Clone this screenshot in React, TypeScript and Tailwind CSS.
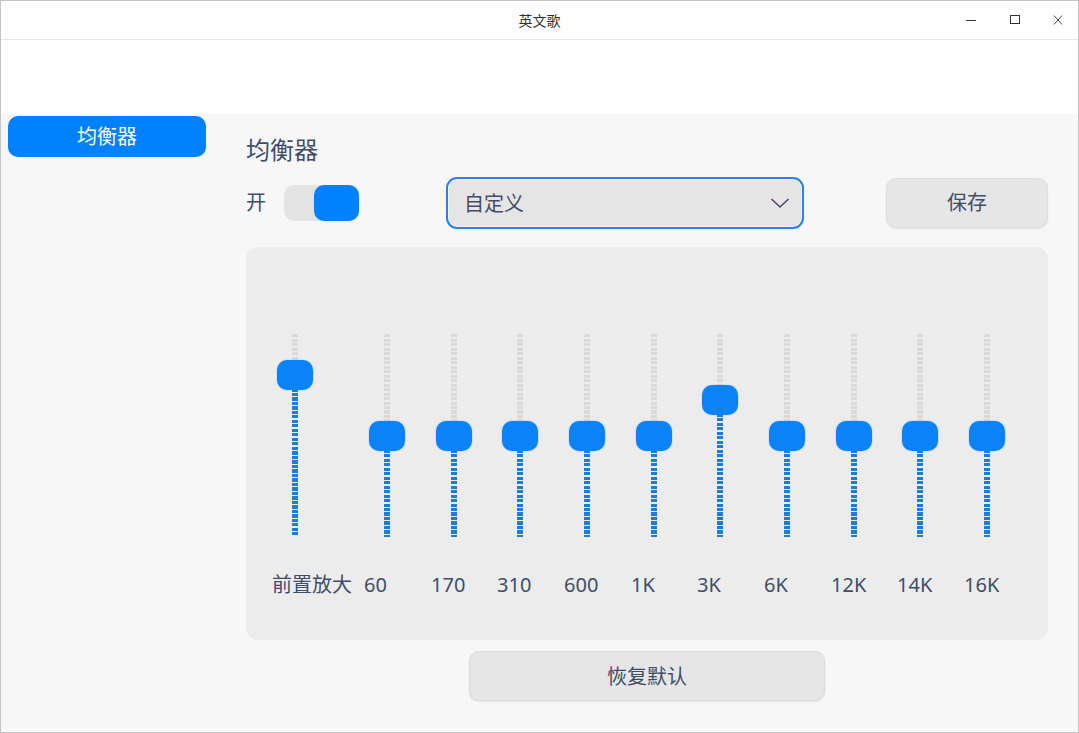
import React from "react";

const FONT = { fontFamily: '"Noto Sans", "Noto Sans CJK SC", sans-serif' };

const TRACK_H = 203;

type Band = { label: string; center: number; width: string };

const bands: Band[] = [
  { label: "前置放大", center: 41, width: "w-[92px]" },
  { label: "60", center: 102, width: "w-[67px]" },
  { label: "170", center: 102, width: "w-[66px]" },
  { label: "310", center: 102, width: "w-[67px]" },
  { label: "600", center: 102, width: "w-[67px]" },
  { label: "1K", center: 102, width: "w-[66px]" },
  { label: "3K", center: 66, width: "w-[67px]" },
  { label: "6K", center: 102, width: "w-[67px]" },
  { label: "12K", center: 102, width: "w-[66px]" },
  { label: "14K", center: 102, width: "w-[67px]" },
  { label: "16K", center: 102, width: "w-[67px]" },
];

function VSlider({ center }: { center: number }) {
  return (
    <div className="relative w-[46px] h-[203px]">
      <div
        className="absolute left-[20px] top-0 w-[6px] bg-[repeating-linear-gradient(to_bottom,#d9d9d9_0px,#d9d9d9_3px,transparent_3px,transparent_4.5px)]"
        style={{ height: center }}
      />
      <div
        className="absolute left-[20px] bottom-0 w-[6px] bg-[repeating-linear-gradient(to_bottom,#1a7ddb_0px,#1a7ddb_3px,transparent_3px,transparent_4.5px)]"
        style={{ height: TRACK_H - center }}
      />
      <div
        className="absolute left-[5px] w-[36px] h-[30px] rounded-[10px] bg-[#0a83f9] shadow-[0_0_2px_rgba(0,129,255,0.35)]"
        style={{ top: center - 15 }}
      />
    </div>
  );
}

export default function App() {
  return (
    <div
      className="w-[1079px] h-[733px] border border-[#c4c4c4] bg-white flex flex-col overflow-hidden"
      style={FONT}
    >
      {/* Title bar */}
      <div className="h-[39px] shrink-0 border-b border-[#e6e6e6] grid grid-cols-[1fr_auto_1fr] items-center">
        <div />
        <div className="text-[14px] text-[#303030]">英文歌</div>
        <div className="flex justify-end items-center h-full">
          <div className="w-[44px] h-full flex items-center justify-center">
            <svg width="12" height="12" viewBox="0 0 12 12">
              <path d="M1 6.5h10" stroke="#333" strokeWidth="1" />
            </svg>
          </div>
          <div className="w-[44px] h-full flex items-center justify-center">
            <svg width="12" height="12" viewBox="0 0 12 12">
              <rect x="1.5" y="1.5" width="9" height="8" fill="none" stroke="#333" strokeWidth="1" />
            </svg>
          </div>
          <div className="w-[41px] h-full flex items-center justify-center">
            <svg width="12" height="12" viewBox="0 0 12 12">
              <path d="M2 1.5l8 9M10 1.5l-8 9" stroke="#444" strokeWidth="1" />
            </svg>
          </div>
        </div>
      </div>

      {/* White strip */}
      <div className="h-[74px] shrink-0 bg-white" />

      {/* Main */}
      <div className="flex-1 flex bg-[#f7f7f7]">
        {/* Sidebar */}
        <div className="w-[245px] shrink-0 pl-[7px] pt-[2px]">
          <div className="w-[198px] h-[41px] rounded-[10px] bg-[#0081ff] flex items-center justify-center text-white text-[20px] pt-[1px]">
            均衡器
          </div>
        </div>

        {/* Content */}
        <div className="w-[802px] flex flex-col pt-[20px]">
          <div className="text-[24px] leading-[32px] text-[#414d68]">均衡器</div>

          <div className="mt-[11px] flex items-center h-[51px]">
            <span className="text-[20px] text-[#414d68] w-[38px] pt-[1px]">开</span>
            <div className="w-[75px] h-[36px] rounded-[10px] bg-[#e3e3e3] flex justify-end">
              <div className="w-[45px] h-[36px] rounded-[10px] bg-[#0081ff]" />
            </div>
            <div className="ml-[87px] w-[358px] h-[52px] rounded-[11px] border-2 border-[#2484e8] bg-[#e5e5e5] flex items-center pl-[16px] pr-[12px] shadow-[inset_0_0_0_1px_rgba(255,255,255,0.6)]">
              <span className="flex-1 text-[20px] text-[#414d68] pt-[2px]">自定义</span>
              <svg width="20" height="12" viewBox="0 0 20 12">
                <path d="M1.5 2l8.5 8 8.5-8" fill="none" stroke="#414d68" strokeWidth="1.6" />
              </svg>
            </div>
            <div className="ml-[82px] w-[162px] h-[50px] rounded-[10px] bg-[#e6e6e6] border border-[#dedede] shadow-[0_1px_2px_rgba(0,0,0,0.08)] flex items-center justify-center text-[20px] text-[#414d68] pt-[1px]">
              保存
            </div>
          </div>

          {/* EQ panel */}
          <div className="mt-[19px] h-[393px] rounded-[12px] bg-[#ececec] pl-[26px] pt-[87px] flex">
            {bands.map((b) => (
              <div key={b.label} className={`${b.width} shrink-0 flex flex-col items-start`}>
                <VSlider center={b.center} />
                <div className="mt-[34px] text-[20px] leading-[28px] text-[#414d68] whitespace-nowrap">
                  {b.label}
                </div>
              </div>
            ))}
          </div>

          <div className="mt-[11px] flex justify-center">
            <div className="w-[356px] h-[50px] rounded-[10px] bg-[#e6e6e6] border border-[#dadada] shadow-[0_1px_2px_rgba(0,0,0,0.08)] flex items-center justify-center text-[20px] text-[#414d68] pt-[2px]">
              恢复默认
            </div>
          </div>
        </div>
      </div>
    </div>
  );
}
